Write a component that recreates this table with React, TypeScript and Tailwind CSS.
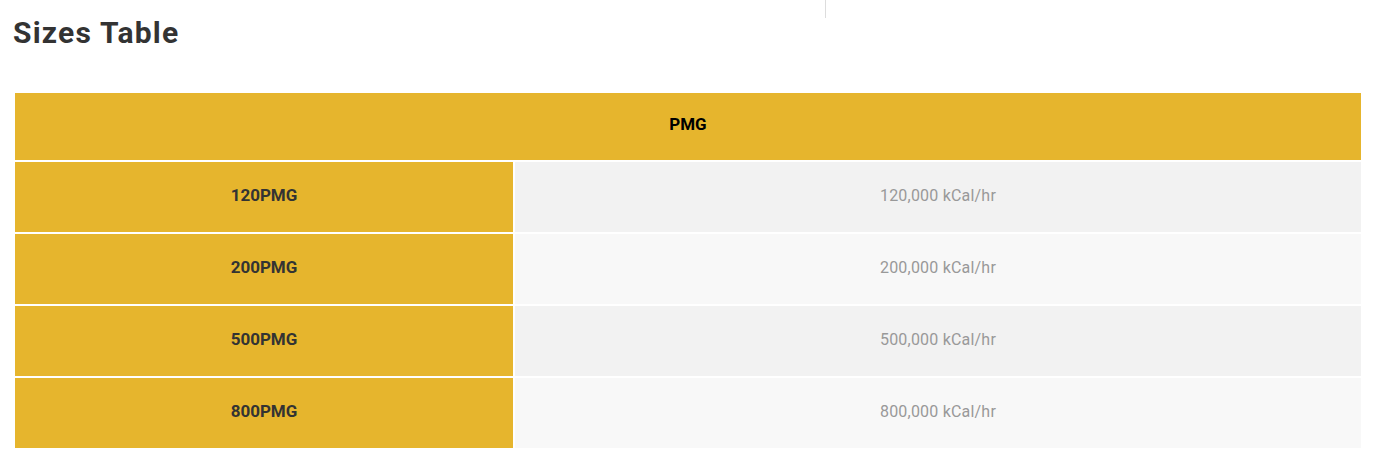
import React from "react";

type SizeRow = {
  model: string;
  output: string;
};

const rows: SizeRow[] = [
  { model: "120PMG", output: "120,000 kCal/hr" },
  { model: "200PMG", output: "200,000 kCal/hr" },
  { model: "500PMG", output: "500,000 kCal/hr" },
  { model: "800PMG", output: "800,000 kCal/hr" },
];

export default function App() {
  return (
    <div className="relative min-h-[472px] bg-white font-['Roboto',sans-serif]">
      {/* divider from the column above */}
      <div className="absolute left-[825px] top-0 h-[18px] w-px bg-[#dddddd]" />

      <h2 className="ml-[13px] pt-[15px] text-[30px] font-bold leading-[36px] tracking-[1.2px] text-[#333333]">
        Sizes Table
      </h2>

      <div className="mt-[42px] ml-[15px] flex w-[1346px] flex-col gap-[2px] bg-white">
        {/* Header */}
        <div className="flex h-[67px] items-center justify-center bg-[#e6b52d] pb-[3px] text-[17px] font-bold text-black">
          PMG
        </div>

        {rows.map((row, i) => (
          <div key={row.model} className="grid h-[70px] grid-cols-[498px_1fr] gap-[2px]">
            <div className="flex items-center justify-center bg-[#e6b52d] pb-[2px] text-[17px] font-bold text-[#333333]">
              {row.model}
            </div>
            <div
              className={
                "flex items-center justify-center pb-[2px] text-base tracking-[0.2px] text-[#999999] " +
                (i % 2 === 0 ? "bg-[#f2f2f2]" : "bg-[#f8f8f8]")
              }
            >
              {row.output}
            </div>
          </div>
        ))}
      </div>
    </div>
  );
}
